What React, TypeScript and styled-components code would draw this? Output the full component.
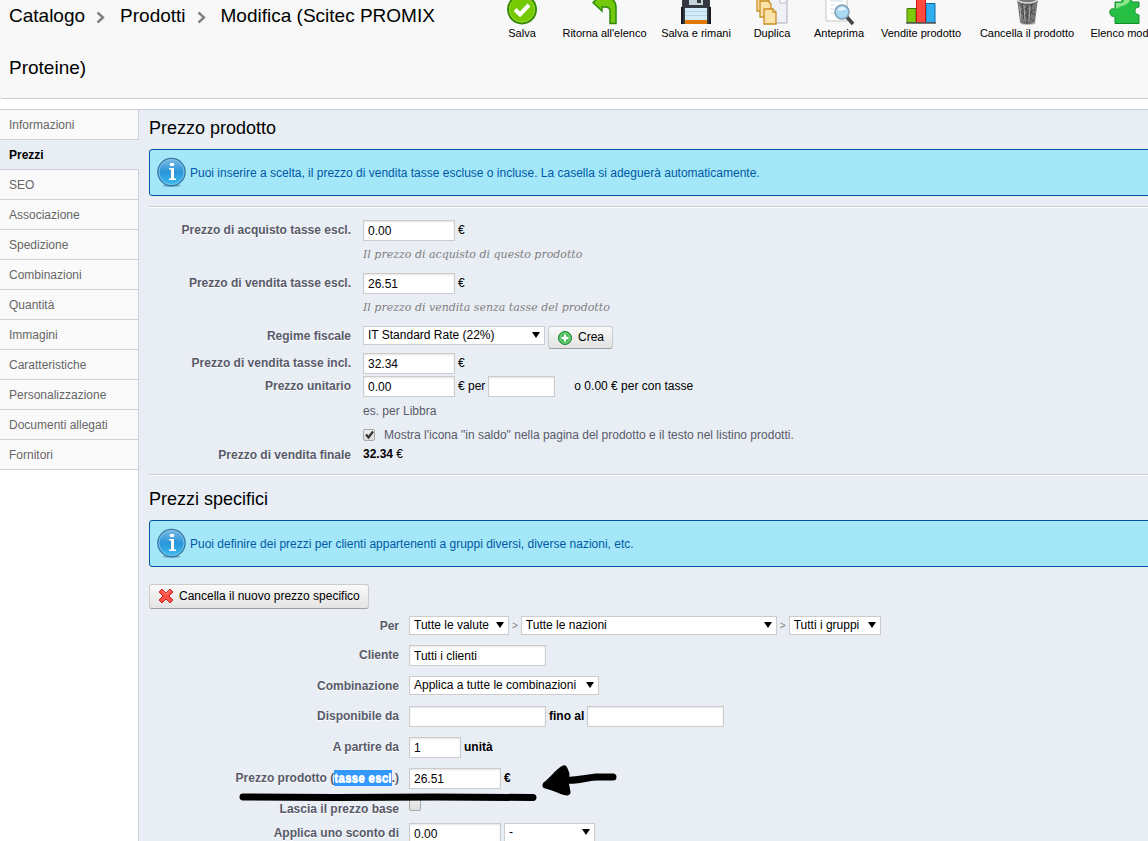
import React from 'react';
import styled, { createGlobalStyle, css } from 'styled-components';

const GlobalStyle = createGlobalStyle`
  *, *::before, *::after { box-sizing: border-box; }
  body {
    margin: 0;
    background: #fff;
    color: #000;
    font-family: "Liberation Sans", Arial, Helvetica, sans-serif;
    font-size: 12px;
  }
  input, select, button { font: inherit; color: inherit; }
`;

const Page = styled.div`
  display: flex;
  flex-direction: column;
  height: 100vh;
  overflow: hidden;
`;

const Header = styled.header`
  display: flex;
  flex: none;
  height: 99px;
  background: #f8f8f8;
  border-bottom: 1px solid #ccc;
  border-radius: 0 0 0 3px;
  overflow: hidden;
`;

const PageTitle = styled.h1`
  flex: none;
  width: 488px;
  margin: -10px 0 0;
  padding: 0 40px 0 9px;
  font-size: 19px;
  font-weight: normal;
  line-height: 52px;
`;

const Chevron = styled.svg`
  width: 9px;
  height: 13px;
  margin: 0 15px 0 11px;
  vertical-align: -2px;
`;

const Toolbar = styled.ul`
  display: flex;
  gap: 17px;
  margin: 0 0 0 9px;
  padding: 0;
  list-style: none;
`;

const ToolItem = styled.li<{ $width: number }>`
  flex: none;
  width: ${p => p.$width}px;
`;

const ToolLink = styled.a`
  display: flex;
  flex-direction: column;
  align-items: center;
  color: #000;
  font-size: 11px;
  line-height: 14px;
  text-decoration: none;
  white-space: nowrap;
`;

const ToolIcon = styled.svg`
  width: 32px;
  height: 26px;
`;

const Body = styled.div`
  display: flex;
  flex: 1;
  min-height: 0;
  margin-top: 10px;
  border-top: 1px solid #ccd0d9;
`;

const Tabs = styled.nav`
  position: relative;
  flex: none;
  width: 139px;
  margin-right: -1px;
`;

const Tab = styled.a<{ $active?: boolean }>`
  display: block;
  height: 30px;
  padding-left: 9px;
  border-right: 1px solid #ccd0d9;
  border-bottom: 1px solid #ccd0d9;
  background: #fafafa;
  color: #666;
  line-height: 31px;
  text-decoration: none;
  ${p => p.$active && css`
    background: #e9eef5;
    border-right-color: #e9eef5;
    color: #000;
    font-weight: bold;
  `}
`;

const Content = styled.main`
  flex: 1;
  min-width: 0;
  padding: 8px 0 0 10px;
  border-left: 1px solid #ccd0d9;
  background: #e9eef5;
  overflow: hidden;
`;

const Heading = styled.h2`
  margin: 0 0 11px;
  font-size: 18px;
  font-weight: normal;
  line-height: 20px;
`;

const Notice = styled.div`
  display: flex;
  align-items: center;
  gap: 2px;
  height: 47px;
  margin-right: -10px;
  padding-left: 6px;
  border: 1px solid #0055a0;
  border-radius: 3px;
  background: #a4e7f8;
  color: #0059a6;
`;

const InfoSvg = styled.svg`
  width: 32px;
  height: 32px;
`;

const Rule = styled.hr<{ $before: number; $after: number }>`
  height: 2px;
  margin: ${p => p.$before}px 0 ${p => p.$after}px;
  border: 0;
  border-top: 1px solid #ccc;
  background: #fff;
`;

const Fields = styled.form<{ $label: number; $gap: number }>`
  --label: ${p => p.$label}px;
  --gap: ${p => p.$gap}px;
`;

const FieldRow = styled.div<{ $height: number }>`
  position: relative;
  display: grid;
  grid-template-columns: var(--label) 1fr;
  column-gap: var(--gap);
  min-height: ${p => p.$height}px;
`;

const Label = styled.label`
  color: #585a69;
  font-weight: bold;
  line-height: 20px;
  text-align: right;
  text-shadow: 0 1px 0 #fff;
`;

const Line = styled.div`
  display: flex;
  align-items: flex-start;
  gap: 3px;
  line-height: 20px;
`;

const TextInput = styled.input<{ $width: number }>`
  width: ${p => p.$width}px;
  height: 21px;
  padding: 1px 4px 0;
  border: 1px solid #ccc;
  background: #fff;
  box-shadow: inset 0 1px 2px #e4e4e4;
  outline: none;
`;

const SelectWrap = styled.span<{ $width: number }>`
  position: relative;
  width: ${p => p.$width}px;
  height: 19px;
  &::after {
    content: "";
    position: absolute;
    top: 6px;
    right: 5px;
    border: 4px solid transparent;
    border-top: 6px solid #000;
    border-bottom: 0;
    pointer-events: none;
  }
`;

const SelectBox = styled.select`
  display: block;
  width: 100%;
  height: 19px;
  padding: 0 4px 1px;
  border: 1px solid #ccc;
  border-radius: 0;
  background: #fff;
  line-height: 16px;
  appearance: none;
  outline: none;
`;

const Button = styled.button<{ $height: number }>`
  display: flex;
  align-items: center;
  gap: 5px;
  height: ${p => p.$height}px;
  padding: 0 8px 2px;
  border: 1px solid #ccc;
  border-bottom-color: #a0a0a0;
  border-radius: 3px;
  background: linear-gradient(#f9f9f9, #e3e3e3);
  white-space: nowrap;
`;

const SmallIcon = styled.svg`
  width: 16px;
  height: 16px;
`;

const Hint = styled.p`
  margin: 6px 0 0;
  color: #7f7f7f;
  font-family: Georgia, "DejaVu Serif", serif;
  font-size: 11px;
  font-style: italic;
  line-height: 16px;
`;

const PlainHint = styled.p`
  margin: 6px 0 0;
  color: #585a69;
  line-height: 16px;
`;

const Check = styled.input`
  appearance: none;
  flex: none;
  width: 12px;
  height: 12px;
  margin: 0;
  border: 1px solid #a9a9a9;
  border-radius: 2px;
  background: linear-gradient(#eee, #dcdcdc);
`;

const CheckLine = styled.div`
  position: relative;
  display: flex;
  align-items: center;
  gap: 9px;
  height: 20px;
`;

const Tick = styled.svg`
  position: absolute;
  left: 0;
  top: 3px;
  width: 13px;
  height: 13px;
  pointer-events: none;
`;

const CheckLabel = styled.label`
  color: #585a69;
`;

const Total = styled.output`
  line-height: 18px;
`;

const Offset = styled.span`
  padding-left: 16px;
`;

const Separator = styled.span`
  color: #7f7f7f;
  font-size: 10px;
`;

const Selected = styled.mark`
  padding: 1px 0;
  background: #3399ff;
  color: #fff;
  text-shadow: 0 1px 0 #fff;
`;

const Toggle = styled.div`
  margin: 17px 0 7px;
`;

const Annotation = styled.svg`
  position: absolute;
  left: 86px;
  top: -8px;
  width: 390px;
  height: 46px;
  pointer-events: none;
  z-index: 1;
`;

const tabs = [
  'Informazioni', 'Prezzi', 'SEO', 'Associazione', 'Spedizione', 'Combinazioni', 'Quantità',
  'Immagini', 'Caratteristiche', 'Personalizzazione', 'Documenti allegati', 'Fornitori',
];

const tools: { label: string; width: number; icon: React.ReactNode }[] = [
  {
    label: 'Salva', width: 50,
    icon: <>
      <circle cx="16" cy="9.500" r="14" fill="#75c900" stroke="#358a06" strokeWidth="2" />
      <circle cx="16" cy="9.500" r="12.500" fill="none" stroke="#9bdc32" />
      <path d="M9 9.500l5 5L23 5" fill="none" stroke="#fff" strokeWidth="4" />
    </>,
  },
  {
    label: "Ritorna all'elenco", width: 81,
    icon: <path d="M4 2.500L13-6v4h4c7 0 10 4 10 10v15.500h-6V11c0-3-2-4-5-4h-3v4z" fill="#74c80a" stroke="#2f8a08" strokeWidth="1.500" />,
  },
  {
    label: 'Salva e rimani', width: 68,
    icon: <>
      <path d="M2-6h28v30H2z" fill="#34383f" />
      <path d="M9-6h14V5H9z" fill="#c3d3da" />
      <path d="M17-6h4V3h-4z" fill="#34383f" />
      <path d="M5 8h22v12H5z" fill="#d3ebf8" />
      <path d="M5 11.500h22M5 15.500h22" stroke="#b4d3e4" />
      <path d="M5 20h22v4H5z" fill="#df7a06" />
      <path d="M2 7v17M30 7v17" stroke="#16191f" strokeWidth="2" />
    </>,
  },
  {
    label: 'Duplica', width: 50,
    icon: <>
      <path d="M11-6h20v29H11z" fill="#f0f1f5" stroke="#a9adb5" />
      <path d="M24-2v5h6" fill="#fff" stroke="#b9bdc5" />
      <g fill="#fbe3a8" stroke="#c98d25" strokeWidth="1.300">
        <path d="M1-6h12V11H1z" />
        <path d="M4 1h8l3 3v13H4z" />
        <path d="M8 9h9l3 3v12H8z" />
        <path d="M17 9v3h3" fill="#fff" />
      </g>
    </>,
  },
  {
    label: 'Anteprima', width: 50,
    icon: <>
      <path d="M3-6h21v27H3z" fill="#fff" stroke="#c5c5c8" />
      <path d="M7 1h13M7 5h5M7 9h4M7 13h5" stroke="#d3d9e2" />
      <path d="M23 16l7 8" stroke="#454548" strokeWidth="3.500" />
      <circle cx="19" cy="12" r="7" fill="#a9d8f3" stroke="#7f9eb5" strokeWidth="1.500" />
      <path d="M14.500 10c2-4 7-4 9 0-3-1-5 2-9 0" fill="#e2f5ff" />
    </>,
  },
  {
    label: 'Vendite prodotto', width: 80,
    icon: <>
      <path d="M2 8.500h9v14H2z" fill="#80c80c" stroke="#3d7d07" />
      <path d="M21 3.500h9v19h-9z" fill="#31aef0" stroke="#0d69a8" />
      <path d="M11.500-6h9v28.500h-9z" fill="#ff4a40" stroke="#c81717" />
      <path d="M1 23h30" stroke="#555" strokeWidth="1.500" />
    </>,
  },
  {
    label: 'Cancella il prodotto', width: 98,
    icon: <>
      <ellipse cx="17" cy="23" rx="8" ry="2" fill="#c8c8c8" />
      <path d="M6-2h21l-3 24c-2 3-13 3-15 0z" fill="#77787a" />
      <path d="M6 1c5 4 16 4 21 0M11 4l3 19M16 4v20M21 4l-3 19M8 13l14-9M9 20l15-11M24 15l-15-9M23 21L9 12" fill="none" stroke="#3c3d3f" strokeWidth=".8" />
      <path d="M9 6l1 15M13 6l1 16M19 6l-1 16" stroke="#bcbdbe" strokeWidth=".8" />
      <path d="M6 0c5 4 16 4 21 0" fill="none" stroke="#dcdcdc" strokeWidth="1.500" />
    </>,
  },
  {
    label: 'Elenco moduli', width: 64,
    icon: <>
      <path d="M6 23.500v-6c-1-2-4 0-5-4-1-4 2-6 5-4V2h6c2-1-1-4 2-7h8c1 3 0 5 1 7h7v5c-2 1-4 0-4 4s3 3 4 4v8.500z" fill="#27bf43" stroke="#118e2c" />
      <path d="M7 9V3h6c3-1 1-4 2-6h5c0 5 2 4-1 6-3 3-8 3-12 6z" fill="#8be58a" />
    </>,
  },
];

function Crumb({ children }: { children: string }) {
  return (
    <>
      {children}
      <Chevron viewBox="0 0 9 13" aria-hidden="true">
        <path d="M1.500 1.500L7 6.500l-5.500 5" fill="none" stroke="#808084" strokeWidth="2.400" />
      </Chevron>
    </>
  );
}

function Info({ id, children }: { id: string; children: string }) {
  return (
    <Notice>
      <InfoSvg viewBox="0 0 32 32" aria-hidden="true">
        <defs>
          <linearGradient id={id} x1="0" y1="0" x2="0" y2="1">
            <stop offset="0" stopColor="#7db8e3" />
            <stop offset=".5" stopColor="#2896da" />
            <stop offset="1" stopColor="#3fbdf0" />
          </linearGradient>
        </defs>
        <ellipse cx="15.500" cy="28.500" rx="9" ry="1.500" fill="#6fa5bd" />
        <circle cx="15.500" cy="15" r="13.700" fill={`url(#${id})`} stroke="#3a78a2" strokeWidth="1.200" />
        <circle cx="15.500" cy="15" r="12.500" fill="none" stroke="#8cc8ea" strokeWidth=".8" />
        <ellipse cx="16" cy="7.500" rx="2.400" ry="1.800" fill="#fff" />
        <path d="M13 11h5v10.500h2V23h-7v-1.500h2v-9h-2z" fill="#fff" />
      </InfoSvg>
      {children}
    </Notice>
  );
}

function Select({ id, label, width, value }: { id: string; label?: string; width: number; value: string }) {
  return (
    <SelectWrap $width={width}>
      <SelectBox id={id} aria-label={label}><option>{value}</option></SelectBox>
    </SelectWrap>
  );
}

export default function App() {
  return (
    <Page>
      <GlobalStyle />
      <Header>
        <PageTitle>
          <Crumb>Catalogo</Crumb>
          <Crumb>Prodotti</Crumb>
          Modifica (Scitec PROMIX Proteine)
        </PageTitle>
        <Toolbar>
          {tools.map(t => (
            <ToolItem key={t.label} $width={t.width}>
              <ToolLink href="#">
                <ToolIcon viewBox="0 0 32 26" aria-hidden="true">{t.icon}</ToolIcon>
                {t.label}
              </ToolLink>
            </ToolItem>
          ))}
        </Toolbar>
      </Header>
      <Body>
        <Tabs>
          {tabs.map(t => <Tab key={t} href="#" $active={t === 'Prezzi'}>{t}</Tab>)}
        </Tabs>
        <Content>
          <Heading>Prezzo prodotto</Heading>
          <Info id="info-price">Puoi inserire a scelta, il prezzo di vendita tasse escluse o incluse. La casella si adeguerà automaticamente.</Info>
          <Rule $before={10} $after={12} />
          <Fields $label={202} $gap={12}>
            <FieldRow $height={53}>
              <Label htmlFor="wholesale">Prezzo di acquisto tasse escl.</Label>
              <div>
                <Line><TextInput id="wholesale" $width={92} defaultValue="0.00" />€</Line>
                <Hint>Il prezzo di acquisto di questo prodotto</Hint>
              </div>
            </FieldRow>
            <FieldRow $height={53}>
              <Label htmlFor="priceTE">Prezzo di vendita tasse escl.</Label>
              <div>
                <Line><TextInput id="priceTE" $width={92} defaultValue="26.51" />€</Line>
                <Hint>Il prezzo di vendita senza tasse del prodotto</Hint>
              </div>
            </FieldRow>
            <FieldRow $height={27}>
              <Label htmlFor="tax">Regime fiscale</Label>
              <Line>
                <Select id="tax" width={182} value="IT Standard Rate (22%)" />
                <Button type="button" $height={23}>
                  <SmallIcon viewBox="0 0 16 16" aria-hidden="true">
                    <circle cx="8" cy="9" r="6.500" fill="#36b44b" stroke="#1f8436" />
                    <circle cx="8" cy="9" r="5" fill="none" stroke="#8bdc92" />
                    <path d="M8 5.500v7M4.500 9h7" stroke="#fff" strokeWidth="2.400" />
                  </SmallIcon>
                  Crea
                </Button>
              </Line>
            </FieldRow>
            <FieldRow $height={23}>
              <Label htmlFor="priceTI">Prezzo di vendita tasse incl.</Label>
              <Line><TextInput id="priceTI" $width={92} defaultValue="32.34" />€</Line>
            </FieldRow>
            <FieldRow $height={49}>
              <Label htmlFor="unit">Prezzo unitario</Label>
              <div>
                <Line>
                  <TextInput id="unit" $width={92} defaultValue="0.00" />
                  € per
                  <TextInput aria-label="Unità" $width={67} />
                  <Offset>o 0.00 € per con tasse</Offset>
                </Line>
                <PlainHint>es. per Libbra</PlainHint>
              </div>
            </FieldRow>
            <FieldRow $height={20}>
              <span />
              <CheckLine>
                <Check type="checkbox" id="sale" defaultChecked />
                <Tick viewBox="0 0 13 13" aria-hidden="true">
                  <path d="M3 6.500l2.500 3L10 3.500" fill="none" stroke="#333" strokeWidth="2.200" />
                </Tick>
                <CheckLabel htmlFor="sale">Mostra l'icona "in saldo" nella pagina del prodotto e il testo nel listino prodotti.</CheckLabel>
              </CheckLine>
            </FieldRow>
            <FieldRow $height={20}>
              <Label htmlFor="final">Prezzo di vendita finale</Label>
              <Total id="final"><b>32.34</b> €</Total>
            </FieldRow>
          </Fields>
          <Rule $before={9} $after={13} />
          <Heading>Prezzi specifici</Heading>
          <Info id="info-specific">Puoi definire dei prezzi per clienti appartenenti a gruppi diversi, diverse nazioni, etc.</Info>
          <Toggle>
            <Button type="button" $height={25}>
              <SmallIcon viewBox="0 0 16 16" aria-hidden="true">
                <path d="M4 1l4 4 4-4 3 3-4 4 4 4-3 3-4-4-4 4-3-3 4-4-4-4z" fill="#fb5147" stroke="#d42620" />
                <path d="M4 2.500l4 4 4-4" fill="none" stroke="#ff9a90" />
              </SmallIcon>
              Cancella il nuovo prezzo specifico
            </Button>
          </Toggle>
          <Fields $label={250} $gap={10}>
            <FieldRow $height={29}>
              <Label htmlFor="currency">Per</Label>
              <Line>
                <Select id="currency" width={100} value="Tutte le valute" />
                <Separator>&gt;</Separator>
                <Select id="country" label="Nazione" width={256} value="Tutte le nazioni" />
                <Separator>&gt;</Separator>
                <Select id="group" label="Gruppo" width={92} value="Tutti i gruppi" />
              </Line>
            </FieldRow>
            <FieldRow $height={31}>
              <Label htmlFor="customer">Cliente</Label>
              <Line><TextInput id="customer" $width={137} defaultValue="Tutti i clienti" /></Line>
            </FieldRow>
            <FieldRow $height={30}>
              <Label htmlFor="combination">Combinazione</Label>
              <Line><Select id="combination" width={190} value="Applica a tutte le combinazioni" /></Line>
            </FieldRow>
            <FieldRow $height={31}>
              <Label htmlFor="from">Disponibile da</Label>
              <Line>
                <TextInput id="from" $width={137} />
                <b>fino al</b>
                <TextInput aria-label="fino al" $width={137} />
              </Line>
            </FieldRow>
            <FieldRow $height={31}>
              <Label htmlFor="quantity">A partire da</Label>
              <Line><TextInput id="quantity" $width={52} defaultValue="1" /><b>unità</b></Line>
            </FieldRow>
            <FieldRow $height={31}>
              <Label htmlFor="specific">Prezzo prodotto (<Selected>tasse escl</Selected>.)</Label>
              <Line><TextInput id="specific" $width={92} defaultValue="26.51" /><b>€</b></Line>
              <Annotation viewBox="0 0 390 46" aria-hidden="true">
                <defs>
                  <filter id="soft" x="-5%" y="-50%" width="110%" height="200%"><feGaussianBlur stdDeviation=".7" /></filter>
                </defs>
                <g filter="url(#soft)" stroke="#000" strokeLinecap="round" strokeLinejoin="round">
                  <path d="M8 37L100 37.500 200 37l98 .5" fill="none" strokeWidth="7" />
                  <path d="M331 20c10 1 18-2 30-3h17" fill="none" strokeWidth="7" />
                  <path d="M311 25c5-3 12-13 18-16l2 5-1 8 2 10c-5 0-9-4-21-7z" strokeWidth="7" />
                </g>
              </Annotation>
            </FieldRow>
            <FieldRow $height={24}>
              <Label htmlFor="base">Lascia il prezzo base</Label>
              <Line><Check type="checkbox" id="base" /></Line>
            </FieldRow>
            <FieldRow $height={31}>
              <Label htmlFor="discount">Applica uno sconto di</Label>
              <Line>
                <TextInput id="discount" $width={92} defaultValue="0.00" />
                <Select id="discount-type" label="Tipo di sconto" width={91} value="-" />
              </Line>
            </FieldRow>
          </Fields>
        </Content>
      </Body>
    </Page>
  );
}
